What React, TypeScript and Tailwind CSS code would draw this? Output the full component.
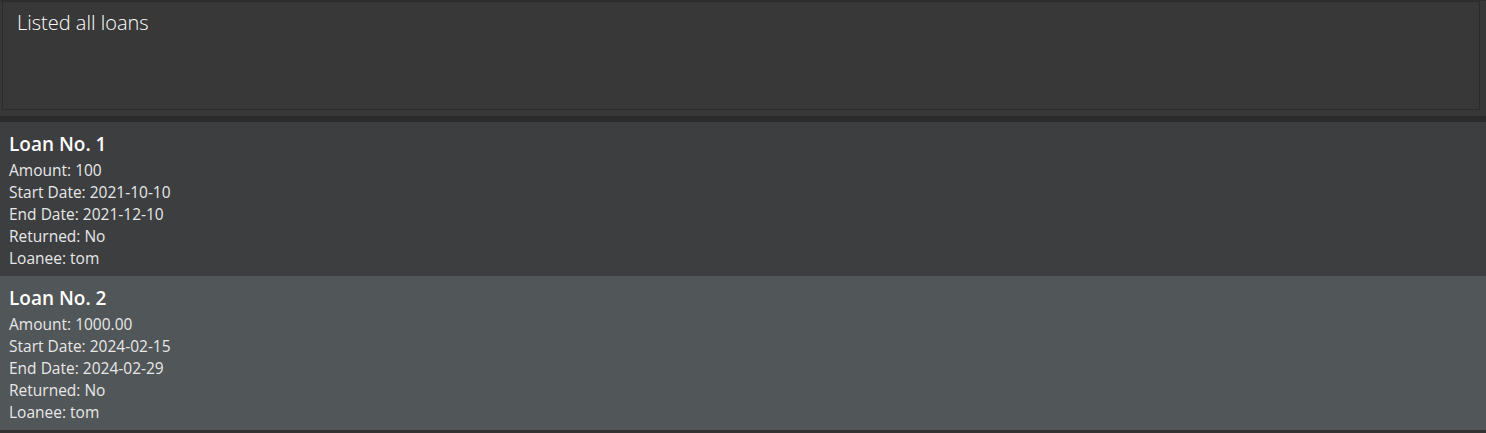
const loans = [
  { id: 1, amount: "100", start: "2021-10-10", end: "2021-12-10", returned: "No", loanee: "tom" },
  { id: 2, amount: "1000.00", start: "2024-02-15", end: "2024-02-29", returned: "No", loanee: "tom" },
];

const LoanCard = ({ loan, odd }: { loan: (typeof loans)[number]; odd: boolean }) => {
  return (
    <div className={`h-[154px] pl-[9px] pt-[10px] ${odd ? "bg-[#3c3e40]" : "bg-[#515658]"}`}>
      <div className="text-[19px] font-semibold leading-[24px] text-white">Loan No. {loan.id}</div>
      <div className="mt-[3px] text-[15.5px] leading-[22px] text-[#e8e8e8]">
        <div>Amount: {loan.amount}</div>
        <div>Start Date: {loan.start}</div>
        <div>End Date: {loan.end}</div>
        <div>Returned: {loan.returned}</div>
        <div>Loanee: {loan.loanee}</div>
      </div>
    </div>
  );
};

export default function App() {
  return (
    <div className="w-[1486px] h-[433px] bg-[#333333] font-['Open_Sans',sans-serif] overflow-hidden">
      <div className="h-[116px] bg-[#383838] border-t border-[#2e2e2e] pl-[2px] pr-[6px] pb-[6px]">
        <div className="h-[109px] border border-[#2b2b2b] bg-[#383838] pl-[14px] pt-[8px]">
          <div className="text-[20px] font-light text-white leading-[26px]">Listed all loans</div>
        </div>
      </div>
      <div className="h-[6px] bg-[#2b2b2b]" />
      {loans.map((loan, index) => (
        <LoanCard key={loan.id} loan={loan} odd={index % 2 === 0} />
      ))}
    </div>
  );
}
